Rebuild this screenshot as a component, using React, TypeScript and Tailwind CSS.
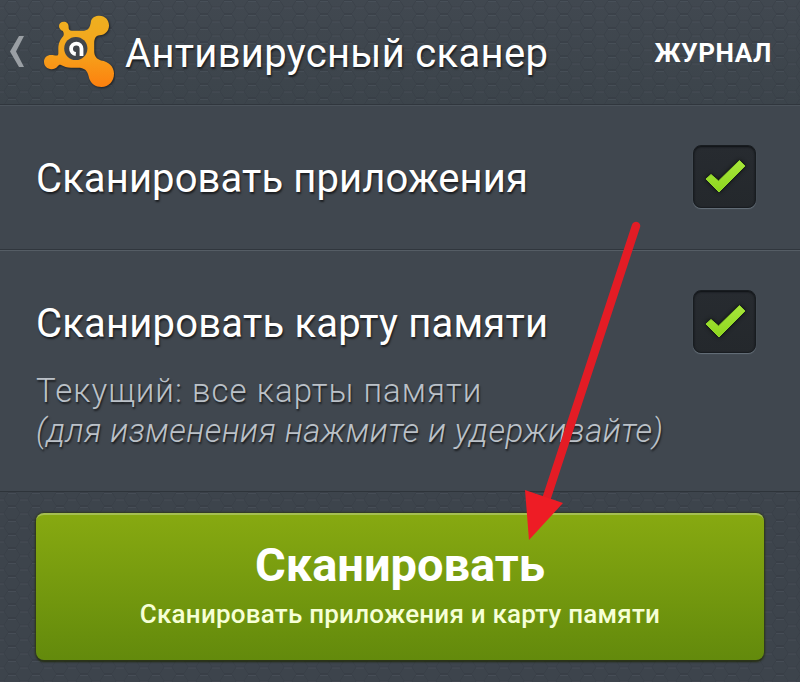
import { useState } from "react";

function HexTexture({ id }: { id: string }) {
  return (
    <svg className="absolute inset-0 w-full h-full pointer-events-none" aria-hidden="true">
      <defs>
        <pattern id={id} width="24" height="14" patternUnits="userSpaceOnUse">
          <g fill="none" strokeWidth="1">
            <path d="M0 7H4L8 0.500H16L20 7H24M4 7L8 13.500H16L20 7" stroke="#30373e" strokeOpacity="0.35" />
            <path d="M0 8H4M8 1.500H16M20 8H24" stroke="#5b656e" strokeOpacity="0.3" />
          </g>
        </pattern>
      </defs>
      <rect width="100%" height="100%" fill={`url(#${id})`} />
    </svg>
  );
}

function AvastLogo() {
  return (
    <svg className="w-[72px] h-[76px] shrink-0" viewBox="43 14 72 76" aria-hidden="true">
      <defs>
        <linearGradient id="logo" x1="0" y1="0" x2="0" y2="1">
          <stop offset="0" stopColor="#eeb020" />
          <stop offset="0.5" stopColor="#f5a41c" />
          <stop offset="1" stopColor="#fd800e" />
        </linearGradient>
      </defs>
      <path
        className="drop-shadow-[1px_1px_1px_rgba(0,0,0,0.5)]"
        d="M91 21C92 17.5 95.500 15.700 99.500 15.700C105 15.700 109 20 109 25.500C109 31 105 35 99.500 35.300C95.500 35.800 94.200 39 94.200 43V51C94.200 56 96.500 59 101 60.500C108.500 61.500 114 66.500 114 73.500C114 81.500 108.500 87 101.500 87C95.500 87 91 83.500 89.200 78.500C88 72.500 86 68.500 80 67.800H71C67 67.800 64 66.500 61 65C59.500 64.500 58.800 65 57.500 66.500C56 68.200 54 69.200 51.500 69.200C47.200 69.200 44 66 44 61.800C44 57.700 47.200 55 51 55C53.500 55 55.200 55.800 57.200 55.500C58.800 55.200 58.300 53 58.300 49C58.300 43 60.500 39 63 36.500C64.200 35 64 33 62.800 31C60.500 30 59 28.500 59 26C59 23.300 61 21.700 63.700 21.700C66.500 21.700 68.600 23.500 68.600 26.500C68.500 29.500 69.500 30.500 72 30.800H82C88 30.800 90 28.500 91 21Z"
        fill="url(#logo)"
      />
      <circle cx="75.800" cy="48.500" r="11.600" fill="#41454a" />
      <path
        d="M75.800 54A5.200 5.200 0 1 1 81.500 48.800V56"
        fill="none"
        stroke="white"
        strokeWidth="3.800"
      />
    </svg>
  );
}

interface CheckBoxProps {
  label: string;
  checked: boolean;
  onToggle: () => void;
}

function CheckBox({ label, checked, onToggle }: CheckBoxProps) {
  return (
    <button
      role="checkbox"
      aria-checked={checked}
      aria-label={label}
      onClick={onToggle}
      className="w-[63px] h-[63px] shrink-0 rounded-[8px] border border-[#181c20] bg-linear-to-b from-[#272b30] to-[#24282c] shadow-[0_1px_1px_#66707a,inset_0_1px_2px_#0d1013]"
    >
      {checked && (
        <svg viewBox="0 0 61 61" className="w-full h-full" aria-hidden="true">
          <defs>
            <linearGradient id="tick" x1="0" y1="0" x2="0" y2="1">
              <stop offset="0" stopColor="#a8e63c" />
              <stop offset="1" stopColor="#8ed61e" />
            </linearGradient>
          </defs>
          <path
            d="M12 33L17 28.500L24.500 35L45.500 14.500L51 20L25 46Z"
            fill="url(#tick)"
            stroke="#93d92c"
            strokeWidth="1"
            strokeLinejoin="round"
            className="drop-shadow-[0_0_2px_#080c05]"
          />
        </svg>
      )}
    </button>
  );
}

export default function App() {
  const [apps, setApps] = useState(true);
  const [card, setCard] = useState(true);

  return (
    <div className="relative w-[800px] h-[682px] overflow-hidden flex flex-col bg-[#40474f] text-white font-[Roboto,sans-serif] [text-shadow:1px_2px_2px_rgba(0,0,0,0.6)]">
      <header className="relative h-[105px] shrink-0 border-b border-[#30363d] bg-linear-to-b from-[#414850] to-[#3c444b]">
        <HexTexture id="hex-header" />
        <div className="relative h-full flex items-center pl-[9px] pr-[29px]">
          <svg className="w-4 h-8 shrink-0" viewBox="0 0 16 32" aria-hidden="true">
            <path d="M10 0H15L7 15.500L15 31H10L1 15.500Z" fill="#9a9fa4" />
          </svg>
          <div className="ml-[18px]">
            <AvastLogo />
          </div>
          <h1 className="ml-[10px] pt-[3px] text-[40px] leading-none whitespace-nowrap tracking-[0.3px]">Антивирусный сканер</h1>
          <button className="ml-auto pt-[2px] -mr-px text-[26px] leading-none font-bold tracking-[0.6px]">ЖУРНАЛ</button>
        </div>
      </header>

      <section className="h-[145px] shrink-0 flex items-center justify-between pl-9 pr-11 pb-[3px] border-t border-[#4b535b] border-b border-b-[#30363d]">
        <span className="pt-[6px] text-[40px] leading-none whitespace-nowrap tracking-[0.1px]">Сканировать приложения</span>
        <CheckBox label="Сканировать приложения" checked={apps} onToggle={() => setApps(!apps)} />
      </section>

      <section className="h-[242px] shrink-0 pl-9 pr-11 pt-[39px] border-t border-[#555d65] border-b border-b-[#2e343a]">
        <div className="flex items-center justify-between">
          <span className="pt-[5px] text-[40px] leading-none whitespace-nowrap tracking-[0.2px]">Сканировать карту памяти</span>
          <CheckBox label="Сканировать карту памяти" checked={card} onToggle={() => setCard(!card)} />
        </div>
        <p className="mt-[18px] text-[33px] leading-10 font-light text-[#bbc1c8] whitespace-nowrap">
          <span className="block tracking-[1.05px]">Текущий: все карты памяти</span>
          <em className="block tracking-[0.45px]">(для изменения нажмите и удерживайте)</em>
        </p>
      </section>

      <footer className="relative flex-1 bg-[#3d444c]">
        <HexTexture id="hex-footer" />
        <div className="relative px-9 pt-[21px]">
          <button className="w-full h-[147px] flex flex-col items-center rounded-[8px] border-t-2 border-[#a5bf50] bg-linear-to-b from-[#87a911] to-[#638a0c] shadow-[0_0_2px_1px_#30381f,0_2px_2px_#20290f]">
            <span className="mt-[26px] text-[47px] leading-[48px] font-bold">Сканировать</span>
            <span className="mt-[10px] text-[26px] leading-[30px] font-medium tracking-[0.22px] text-[#f6ffd6]">
              Сканировать приложения и карту памяти
            </span>
          </button>
        </div>
      </footer>

      <svg className="absolute inset-0 w-full h-full pointer-events-none" aria-hidden="true">
        <path d="M636 226L546 500" stroke="#e31c25" strokeWidth="8.500" strokeLinecap="round" />
        <path d="M525 490L563 503L529 540Z" fill="#ee1c25" />
      </svg>
    </div>
  );
}
